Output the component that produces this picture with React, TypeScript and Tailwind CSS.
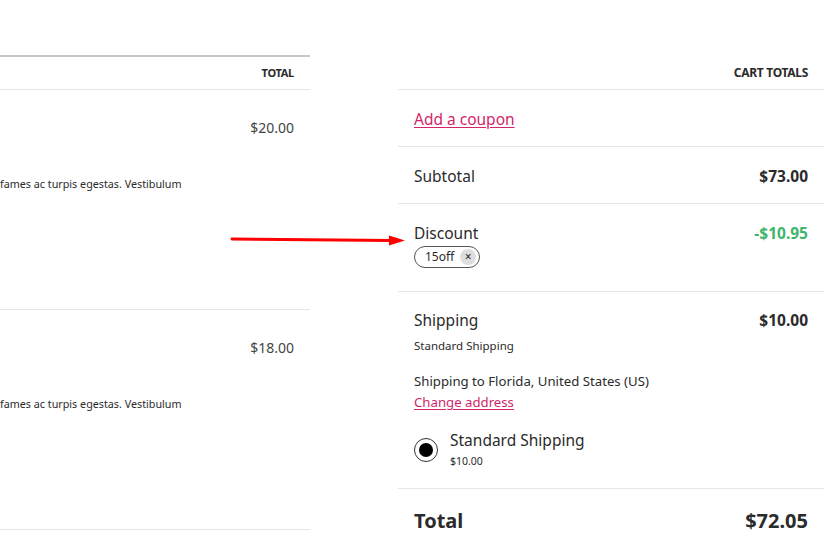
import React from "react";

const items = [{ price: "$20.00" }, { price: "$18.00" }];

export default function App() {
  return (
    <div
      className="relative flex h-[554px] w-[826px] overflow-hidden bg-white text-[#2b2b2b]"
      style={{ fontFamily: '"Noto Sans", "Open Sans", sans-serif' }}
    >
      {/* order table */}
      <div className="w-[310px] shrink-0 pt-[55px]">
        <div className="border-t-2 border-[#c8c8c8]">
          <div className="flex h-[33px] items-center justify-end border-b border-[#e6e6e6] pr-4 text-[11px] font-bold uppercase tracking-tight">
            Total
          </div>
        </div>
        {items.map((it) => (
          <div key={it.price} className="h-[220px] border-b border-[#e6e6e6]">
            <div className="flex justify-end pt-[28px] pr-4 text-[14px] leading-[20px] text-[#444]">
              {it.price}
            </div>
            <div className="mt-[37px] whitespace-nowrap text-[10.75px] leading-[18px]">
              fames ac turpis egestas. Vestibulum
            </div>
          </div>
        ))}
      </div>

      <div className="w-[88px] shrink-0" />

      {/* cart totals */}
      <div className="w-[426px] shrink-0 pt-[56px]">
        <div className="flex h-[34px] items-center justify-end border-b border-[#e6e6e6] pr-4 text-[12px] font-bold uppercase tracking-tight">
          Cart totals
        </div>

        <div className="border-b border-[#e6e6e6] px-4 pt-[17px] pb-[15px]">
          <a href="#" className="text-[15.5px] leading-[24px] text-[#d1276a] underline underline-offset-2">
            Add a coupon
          </a>
        </div>

        <div className="flex justify-between border-b border-[#e6e6e6] px-4 pt-[17px] pb-[15px] text-[15.5px] leading-[24px]">
          <span>Subtotal</span>
          <span className="font-bold">$73.00</span>
        </div>

        <div className="border-b border-[#e6e6e6] px-4 pt-[17px] pb-[23px]">
          <div className="flex justify-between text-[15.5px] leading-[24px]">
            <span>Discount</span>
            <span className="font-bold text-[#3fb56c]">-$10.95</span>
          </div>
          <div className="mt-[1px] flex h-[22px] w-fit items-center gap-[6px] rounded-full border border-[#555] pr-[3px] pl-[10px] text-[12px]">
            <span>15off</span>
            <span className="flex h-[16px] w-[16px] items-center justify-center rounded-full bg-[#dedede] text-[12px] leading-none">
              ×
            </span>
          </div>
        </div>

        <div className="border-b border-[#e6e6e6] px-4 pt-[16px] pb-[17px]">
          <div className="flex justify-between text-[15.5px] leading-[24px]">
            <span>Shipping</span>
            <span className="font-bold">$10.00</span>
          </div>
          <div className="mt-[4px] text-[11.5px] leading-[20px]">Standard Shipping</div>
          <div className="mt-[14px] text-[13.2px] leading-[22px]">
            Shipping to Florida, United States (US)
          </div>
          <a href="#" className="block text-[13.2px] leading-[20px] text-[#d1276a] underline underline-offset-2">
            Change address
          </a>
          <div className="mt-[17px] flex items-center gap-3">
            <span className="flex h-[24px] w-[24px] items-center justify-center rounded-full border border-[#333]">
              <span className="h-[14px] w-[14px] rounded-full bg-black" />
            </span>
            <div>
              <div className="text-[15.5px] leading-[22px]">Standard Shipping</div>
              <div className="text-[10.5px] leading-[20px]">$10.00</div>
            </div>
          </div>
        </div>

        <div className="flex justify-between px-4 pt-[18px] text-[20px] font-bold leading-[28px]">
          <span>Total</span>
          <span>$72.05</span>
        </div>
      </div>

      {/* annotation arrow */}
      <svg className="absolute top-0 left-0" width="826" height="554" viewBox="0 0 826 554">
        <line x1="232" y1="239" x2="392" y2="240.5" stroke="#f00" strokeWidth="3" strokeLinecap="round" />
        <polygon points="389,235.5 405,240.5 389,245.5" fill="#f00" />
      </svg>
    </div>
  );
}
